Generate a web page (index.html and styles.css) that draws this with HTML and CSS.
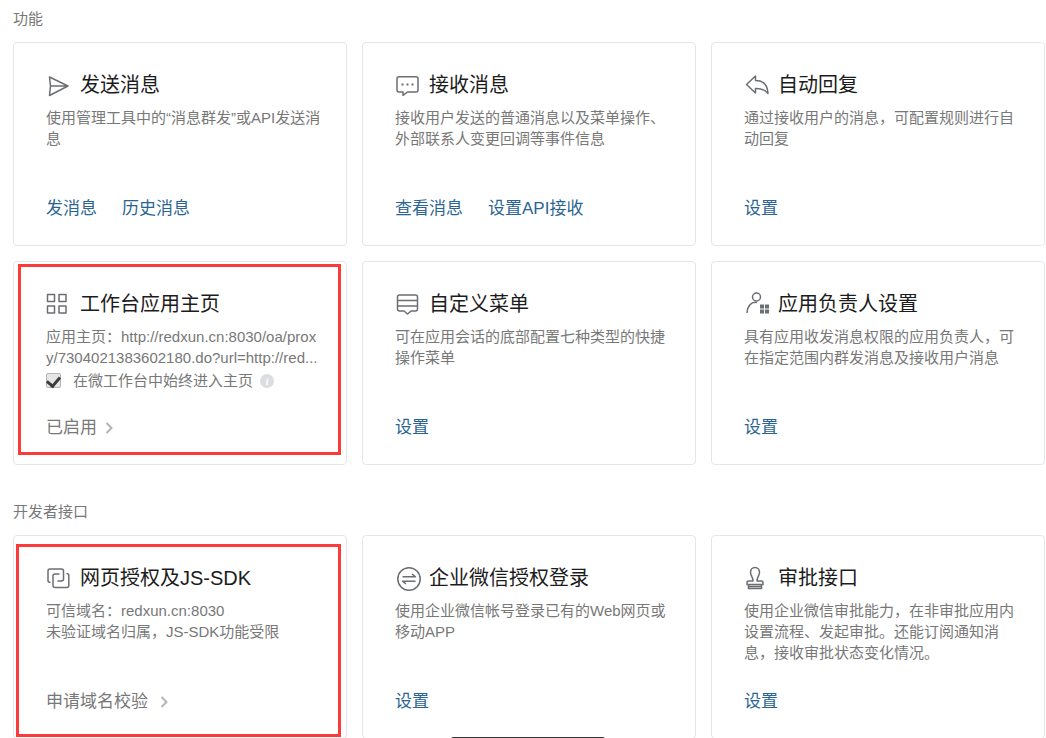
FILE: index.html
```html
<!DOCTYPE html>
<html lang="zh-CN">
<head>
<meta charset="utf-8">
<title>应用管理</title>
<link rel="stylesheet" href="styles.css">
</head>
<body>
<main class="page">
  <section class="group">
    <h2 class="group-title">功能</h2>
    <div class="cards">
      <article class="card">
        <h3 class="card-title">
          <svg class="icon" viewBox="0 0 24 24"><path d="M3.500 4 22 13 3.500 22.500 4.500 13ZM4.500 13H22"/></svg>发送消息</h3>
        <p class="desc">使用管理工具中的“消息群发”或API发送消息</p>
        <div class="actions"><a class="link" href="#">发消息</a><a class="link" href="#">历史消息</a></div>
      </article>
      <article class="card">
        <h3 class="card-title">
          <svg class="icon" viewBox="0 0 24 24"><path d="M4 3.700H21Q23 3.700 23 5.700V17Q23 19 21 19H12.500L8 22.300V19H4Q2 19 2 17V5.700Q2 3.700 4 3.700Z"/><path class="solid" d="M6.500 10.500h2v2h-2zM11.500 10.500h2v2h-2zM16.500 10.500h2v2h-2z"/></svg>接收消息</h3>
        <p class="desc">接收用户发送的普通消息以及菜单操作、外部联系人变更回调等事件信息</p>
        <div class="actions"><a class="link" href="#">查看消息</a><a class="link" href="#">设置API接收</a></div>
      </article>
      <article class="card">
        <h3 class="card-title">
          <svg class="icon" viewBox="0 0 24 24"><path d="M2.500 11.500 11.500 3V7.500C19 7.500 23.500 12 24 20.500 20.500 16 17 15.300 11.500 15.500V20Z"/></svg>自动回复</h3>
        <p class="desc">通过接收用户的消息，可配置规则进行自动回复</p>
        <div class="actions"><a class="link" href="#">设置</a></div>
      </article>
      <article class="card">
        <h3 class="card-title">
          <svg class="icon" viewBox="0 0 24 24"><path d="M1.500 2.500H8.500V9.500H1.500ZM13 2.500H20V9.500H13ZM1.500 14H8.500V21H1.500ZM13 14H20V21H13Z"/></svg>工作台应用主页</h3>
        <p class="desc">应用主页：http://redxun.cn:8030/oa/prox<br>y/7304021383602180.do?url=http://red...</p>
        <div class="option">
          <input class="check" type="checkbox" id="always-home" checked>
          <label for="always-home">在微工作台中始终进入主页</label>
          <span class="info">i</span>
        </div>
        <div class="actions"><a class="link muted" href="#">已启用<svg class="chevron" viewBox="0 0 8 12"><path d="M1.500 1 6.500 6 1.500 11"/></svg></a></div>
        <div class="mark"></div>
      </article>
      <article class="card">
        <h3 class="card-title">
          <svg class="icon" viewBox="0 0 24 24"><path d="M4.500 3H20.500Q22.500 3 22.500 5V17Q22.500 19 20.500 19H16L12.500 22 9 19H4.500Q2.500 19 2.500 17V5Q2.500 3 4.500 3ZM3 8.500H22M3 14H22"/></svg>自定义菜单</h3>
        <p class="desc">可在应用会话的底部配置七种类型的快捷操作菜单</p>
        <div class="actions"><a class="link" href="#">设置</a></div>
      </article>
      <article class="card">
        <h3 class="card-title">
          <svg class="icon" viewBox="0 0 24 24"><circle cx="12.500" cy="5" r="4"/><path d="M3 21C3.500 14 7 9.500 13 10.500"/><path class="solid" d="M16 12.500h4v4h-4zM21 12.500h4v4h-4zM16 17.500h4v4h-4zM21 17.500h4v4h-4z"/></svg>应用负责人设置</h3>
        <p class="desc">具有应用收发消息权限的应用负责人，可在指定范围内群发消息及接收用户消息</p>
        <div class="actions"><a class="link" href="#">设置</a></div>
      </article>
    </div>
  </section>
  <section class="group">
    <h2 class="group-title">开发者接口</h2>
    <div class="cards">
      <article class="card">
        <h3 class="card-title">
          <svg class="icon" viewBox="0 0 24 24"><path d="M4.500 16.500Q2 16.500 2 14.500V5Q2 3 4 3H15.500Q17.500 3 17.500 5V13Q17.500 15 15.500 15H11.500M20.500 7.500Q22.800 7.500 22.800 9.500V19.500Q22.800 21.500 20.800 21.500H9Q7 21.500 7 19.500V10Q7 8 9 8H13.500"/></svg>网页授权及JS-SDK</h3>
        <p class="desc">可信域名：redxun.cn:8030<br>未验证域名归属，JS-SDK功能受限</p>
        <div class="actions"><a class="link muted wide" href="#">申请域名校验<svg class="chevron" viewBox="0 0 8 12"><path d="M1.500 1 6.500 6 1.500 11"/></svg></a></div>
        <div class="mark mark-tall"></div>
      </article>
      <article class="card">
        <h3 class="card-title">
          <svg class="icon" viewBox="0 0 24 24"><circle cx="14" cy="13" r="11.200"/><path d="M7.500 10.800H20.500L17 8M20.500 15.200H7.500L11 18"/></svg>企业微信授权登录</h3>
        <p class="desc">使用企业微信帐号登录已有的Web网页或移动APP</p>
        <div class="actions"><a class="link" href="#">设置</a></div>
      </article>
      <article class="card">
        <h3 class="card-title">
          <svg class="icon" viewBox="0 0 24 24"><path d="M9 15C9 11 6.500 9.500 6.500 6.500 6.500 3.500 8.500 1.500 11 1.500S15.500 3.500 15.500 6.500C15.500 9.500 13 11 13 15H17Q19 15 19 16.500V18.500H3V16.500Q3 15 5 15ZM4.500 18.500V22.500H17.500V18.500M5 20.500H17"/></svg>审批接口</h3>
        <p class="desc">使用企业微信审批能力，在非审批应用内设置流程、发起审批。还能订阅通知消息，接收审批状态变化情况。</p>
        <div class="actions"><a class="link" href="#">设置</a></div>
      </article>
    </div>
  </section>
</main>
<div class="toast"></div>
</body>
</html>
```

FILE: styles.css
```css
* {
  box-sizing: border-box;
}

html {
  overflow-x: hidden;
}

body {
  margin: 0;
  background: #fff;
  color: #787878;
  font-family: "Liberation Sans", "Noto Sans CJK SC", sans-serif;
  font-size: 15px;
  line-height: 21px;
}

.page {
  padding: 8px 1px 0 13px;
}

.group + .group {
  margin-top: 36px;
}

.group-title {
  margin: 0 0 13px;
  font-size: 15px;
  font-weight: 400;
  line-height: 21px;
}

.cards {
  display: grid;
  grid-template-columns: repeat(3, 1fr);
  gap: 15px;
}

.card {
  position: relative;
  display: flex;
  flex-direction: column;
  min-height: 204px;
  padding: 28px 24px 24px 32px;
  border: 1px solid #e4e6e9;
  border-radius: 4px;
}

.card-title {
  display: flex;
  align-items: center;
  gap: 10px;
  margin: 0 0 8px;
  color: #1c1c1c;
  font-size: 20px;
  font-weight: 400;
  line-height: 28px;
}

.icon {
  flex: none;
  width: 24px;
  height: 24px;
  overflow: visible;
  fill: none;
  stroke: #6b6e72;
  stroke-width: 1.5;
  stroke-linejoin: round;
}

.icon .solid {
  fill: #6b6e72;
  stroke: none;
}

.desc {
  margin: 0;
}

.option {
  display: flex;
  align-items: center;
  margin-top: 2px;
}

.check {
  appearance: none;
  display: grid;
  place-items: center;
  width: 15px;
  height: 15px;
  margin: 0 12px 0 0;
  border: 1px solid #b4b4b4;
  border-radius: 2px;
  background: #e6e6e6;
}

.check:checked::before {
  content: "";
  width: 6px;
  height: 10px;
  margin-bottom: 3px;
  border: solid #3c3c3c;
  border-width: 0 3px 3px 0;
  transform: rotate(40deg);
}

.info {
  width: 14px;
  height: 14px;
  margin-left: 7px;
  border-radius: 50%;
  background: #dcdde0;
  color: #fff;
  font: italic bold 11px/14px "Liberation Serif", serif;
  text-align: center;
}

.actions {
  display: flex;
  gap: 25px;
  margin-top: auto;
}

.link {
  display: flex;
  align-items: center;
  gap: 8px;
  color: #2a6592;
  font-size: 17px;
  line-height: 24px;
  text-decoration: none;
}

.muted {
  color: #787878;
}

.wide {
  gap: 12px;
}

.chevron {
  width: 8px;
  height: 12px;
  fill: none;
  stroke: #b2b4b7;
  stroke-width: 2;
}

.mark {
  position: absolute;
  inset: 2px 5px 9px 4px;
  border: 3px solid #fb3a3a;
  pointer-events: none;
}

.mark-tall {
  inset: 8px 5px 1px 2px;
}

.toast {
  position: fixed;
  bottom: -39px;
  left: 50%;
  width: 156px;
  height: 40px;
  margin-left: -73px;
  border-radius: 4px;
  background: #333;
}
```
